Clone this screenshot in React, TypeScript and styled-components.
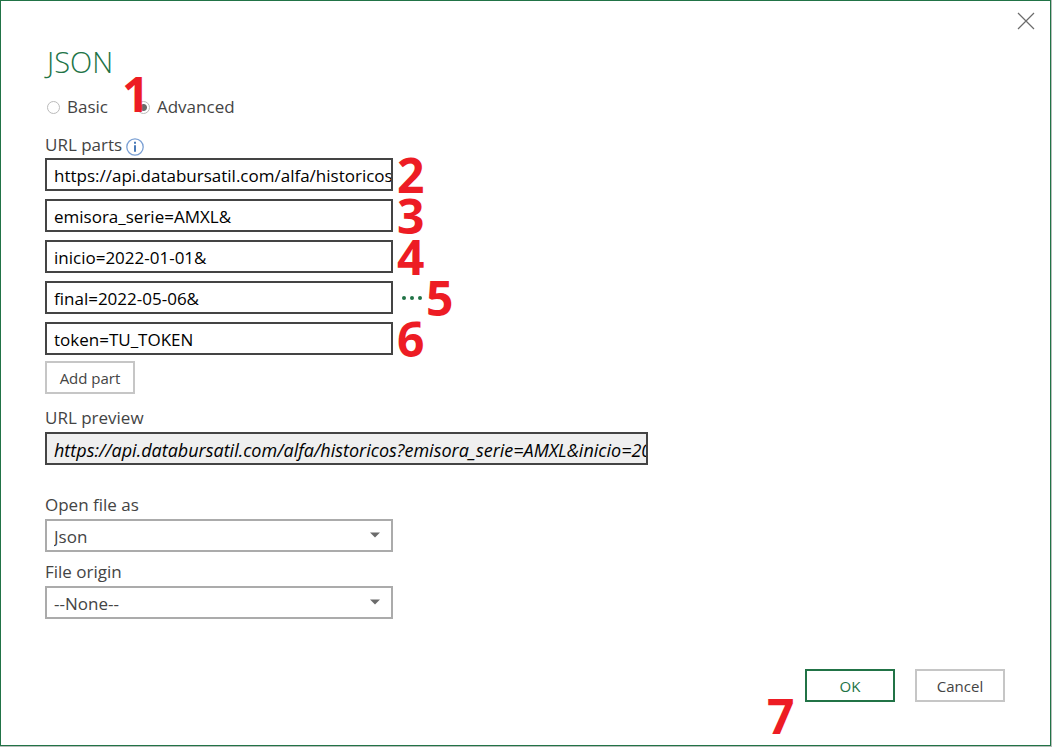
import React, { useState } from "react";
import styled, { createGlobalStyle, css } from "styled-components";

const GlobalStyle = createGlobalStyle`
  *, *::before, *::after { box-sizing: border-box; }
  body {
    margin: 0;
    background: #b9bdbb;
    color: #444;
    font-family: "Open Sans", "Noto Sans", sans-serif;
    font-size: 17px;
    line-height: 24px;
  }
  button, input, select { font: inherit; color: inherit; margin: 0; }
`;

const Page = styled.div`
  display: flex;
  min-height: 100vh;
  padding: 0 1px 1px 0;
`;

const Dialog = styled.main`
  flex: 1;
  min-width: 0;
  display: flex;
  flex-direction: column;
  position: relative;
  padding: 40px 45px 43px 44px;
  background: #fff;
  border: 1px solid #217346;
`;

const CloseButton = styled.button`
  position: absolute;
  top: 8px;
  right: 12px;
  width: 24px;
  height: 24px;
  padding: 3px;
  border: 0;
  background: none;
  svg { display: block; }
`;

const Title = styled.h1`
  margin: 0;
  padding-left: 2px;
  font-size: 29px;
  line-height: 42px;
  font-weight: 300;
  color: #217346;
`;

const ModeGroup = styled.div`
  display: flex;
  gap: 29px;
  padding: 12px 0 14px 2px;
`;

const RadioLabel = styled.label`
  position: relative;
  display: flex;
  align-items: center;
  gap: 7px;
`;

const Radio = styled.input`
  appearance: none;
  width: 13px;
  height: 13px;
  border: 1px solid #bbb;
  border-radius: 50%;
  background: #fff;
  &:checked {
    background: radial-gradient(circle, #6b6b6b 3px, #fff 4px);
  }
`;

const Label = styled.label`
  display: block;
`;

const LabelRow = styled.div`
  display: flex;
  align-items: center;
  gap: 4px;
  padding-bottom: 1px;
  svg { margin-top: 3px; }
`;

const Parts = styled.div`
  display: flex;
  flex-direction: column;
  gap: 8px;
  padding-bottom: 6px;
`;

const PartRow = styled.div`
  display: flex;
  align-items: center;
  height: 33px;
`;

const box = css`
  display: block;
  width: 348px;
  max-width: 100%;
  height: 33px;
  padding: 2px 0 0 7px;
  border: 2px solid #444;
  border-radius: 0;
  background: #fff;
`;

const TextBox = styled.input`
  ${box}
  color: #000;
`;

const PreviewBox = styled(TextBox)`
  width: 603px;
  background: #efefef;
  font-size: 18px;
  font-style: italic;
`;

const SelectWrap = styled.div`
  position: relative;
  width: 348px;
  max-width: 100%;
  svg {
    position: absolute;
    right: 13px;
    top: 13px;
    pointer-events: none;
  }
`;

const Select = styled.select`
  ${box}
  appearance: none;
  border-color: #ababab;
`;

const Button = styled.button<{ $primary?: boolean }>`
  width: 90px;
  height: 33px;
  padding: 0;
  border: 2px solid ${(p) => (p.$primary ? "#217346" : "#c6c6c6")};
  background: #fff;
  color: ${(p) => (p.$primary ? "#217346" : "#444")};
  font-size: 15px;
  line-height: 24px;
`;

const Group = styled.div<{ $top: number }>`
  display: flex;
  flex-direction: column;
  gap: 2px;
  padding-top: ${(p) => p.$top}px;
`;

const MoreButton = styled.button`
  display: flex;
  gap: 4px;
  margin-left: 9px;
  padding: 1px 0 0;
  border: 0;
  background: none;
  i {
    width: 4px;
    height: 4px;
    border-radius: 50%;
    background: #217346;
  }
`;

const Footer = styled.div`
  display: flex;
  justify-content: flex-end;
  gap: 20px;
  margin-top: auto;
  padding-top: 24px;
`;

const Anchor = styled.div`
  position: relative;
`;

const Step = styled.span`
  margin-left: 4px;
  color: #ed1c24;
  font-size: 48px;
  line-height: 33px;
  font-weight: 700;
`;

const FloatingStep = styled(Step)<{ $left: number; $top: number }>`
  position: absolute;
  left: ${(p) => p.$left}px;
  top: ${(p) => p.$top}px;
  margin: 0;
`;

const InfoIcon = () => (
  <svg width="18" height="18" viewBox="0 0 18 18" role="img" aria-label="Info">
    <circle cx="9" cy="9" r="8.2" fill="#fff" stroke="#7ba0d4" strokeWidth="1.3" />
    <path d="M8 3.8h2v2H8zM8 7.3h2v6.5H8z" fill="#4a7ab8" />
  </svg>
);

const Arrow = () => (
  <svg width="10" height="6" viewBox="0 0 10 6" aria-hidden="true">
    <path d="M0 0.5h10L5 5.5z" fill="#6b6b6b" />
  </svg>
);

const initialParts = [
  "https://api.databursatil.com/alfa/historicos?",
  "emisora_serie=AMXL&",
  "inicio=2022-01-01&",
  "final=2022-05-06&",
  "token=TU_TOKEN",
];

export default function App() {
  const [mode, setMode] = useState("advanced");
  const [parts, setParts] = useState(initialParts);

  return (
    <Page>
      <GlobalStyle />
      <Dialog>
        <CloseButton aria-label="Close">
          <svg width="18" height="18" viewBox="0 0 18 18">
            <path d="M1 1l16 16M17 1L1 17" stroke="#6b6b6b" strokeWidth="1.2" fill="none" />
          </svg>
        </CloseButton>
        <Title>JSON</Title>
        <ModeGroup role="radiogroup" aria-label="Mode">
          <RadioLabel>
            <Radio type="radio" name="mode" checked={mode === "basic"} onChange={() => setMode("basic")} />
            Basic
          </RadioLabel>
          <RadioLabel>
            <Radio type="radio" name="mode" checked={mode === "advanced"} onChange={() => setMode("advanced")} />
            Advanced
            <FloatingStep $left={-15} $top={-18}>1</FloatingStep>
          </RadioLabel>
        </ModeGroup>
        <LabelRow>
          <Label htmlFor="part-0">URL parts</Label>
          <InfoIcon />
        </LabelRow>
        <Parts>
          {parts.map((part, i) => (
            <PartRow key={i}>
              <TextBox
                id={`part-${i}`}
                aria-label={`URL part ${i + 1}`}
                value={part}
                onChange={(e) => setParts(parts.map((p, j) => (j === i ? e.target.value : p)))}
              />
              {i === 3 && (
                <MoreButton aria-label="More options">
                  <i /><i /><i />
                </MoreButton>
              )}
              {i < 5 && <Step>{i + 2}</Step>}
            </PartRow>
          ))}
        </Parts>
        <div>
          <Button onClick={() => setParts([...parts, ""])}>Add part</Button>
        </div>
        <Group $top={12}>
          <Label htmlFor="preview">URL preview</Label>
          <PreviewBox id="preview" readOnly value={parts.join("")} />
        </Group>
        <Group $top={28}>
          <Label htmlFor="open-as">Open file as</Label>
          <SelectWrap>
            <Select id="open-as"><option>Json</option></Select>
            <Arrow />
          </SelectWrap>
        </Group>
        <Group $top={8}>
          <Label htmlFor="origin">File origin</Label>
          <SelectWrap>
            <Select id="origin"><option>--None--</option></Select>
            <Arrow />
          </SelectWrap>
        </Group>
        <Footer>
          <Anchor>
            <Button $primary>OK</Button>
            <FloatingStep $left={-38} $top={30}>7</FloatingStep>
          </Anchor>
          <Button>Cancel</Button>
        </Footer>
      </Dialog>
    </Page>
  );
}
